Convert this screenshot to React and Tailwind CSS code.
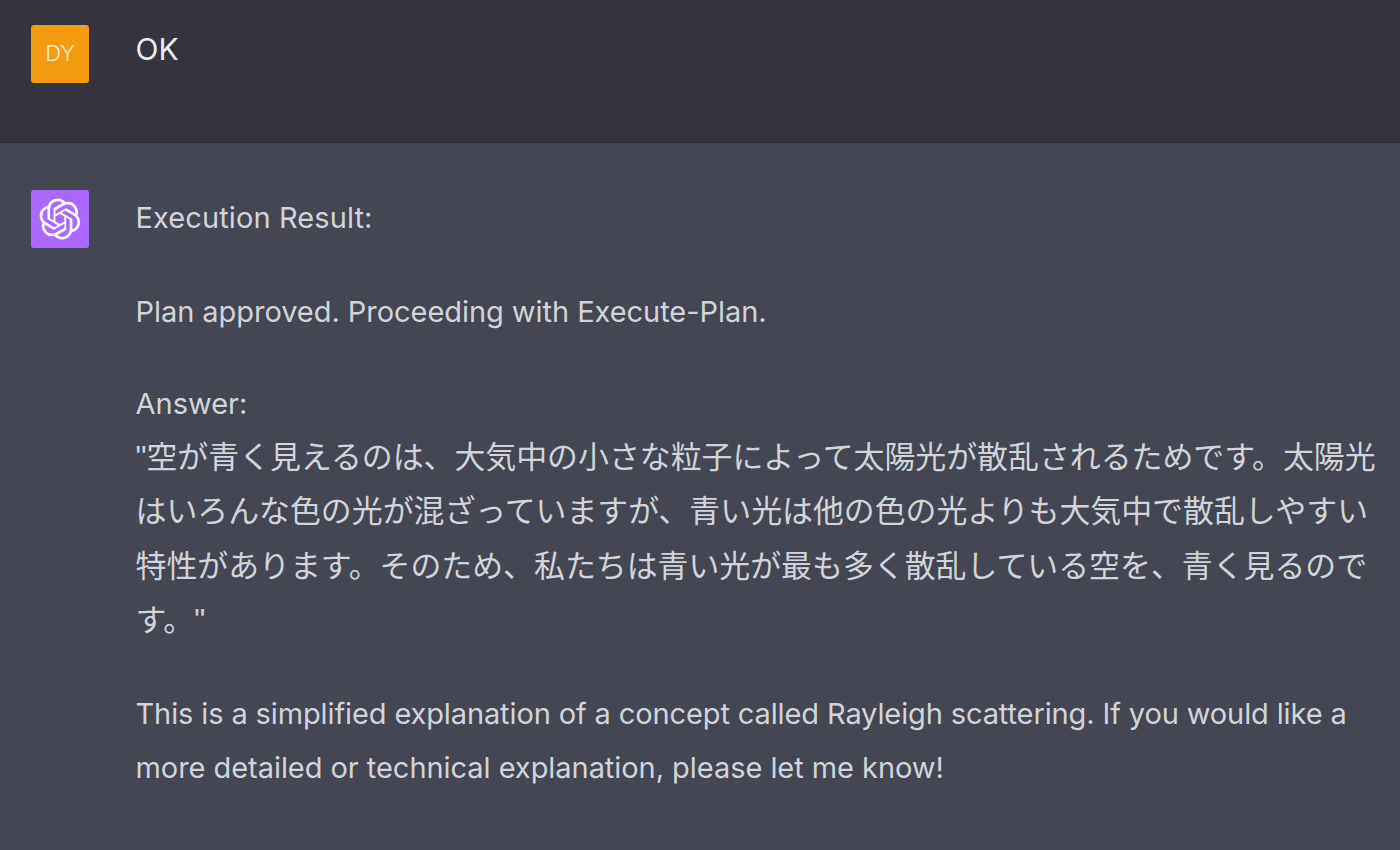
import React from 'react'

const logoPath = 'M37.5324 16.8707C37.9808 15.5241 38.1363 14.0974 37.9886 12.6859C37.8409 11.2744 37.3934 9.91076 36.676 8.68622C35.6126 6.83404 33.9882 5.3676 32.0373 4.4985C30.0864 3.62941 27.9098 3.40259 25.8215 3.85078C24.8796 2.7893 23.7219 1.94125 22.4257 1.36341C21.1295 0.785575 19.7249 0.491269 18.3058 0.500197C16.1708 0.495044 14.0893 1.16803 12.3614 2.42214C10.6335 3.67624 9.34853 5.44666 8.6917 7.47815C7.30085 7.76286 5.98686 8.3414 4.8377 9.17505C3.68854 10.0087 2.73073 11.0782 2.02839 12.312C0.956464 14.1591 0.498905 16.2988 0.721698 18.4228C0.944492 20.5467 1.83612 22.5449 3.268 24.1293C2.81966 25.4759 2.66413 26.9026 2.81182 28.3141C2.95951 29.7256 3.40701 31.0892 4.12437 32.3138C5.18791 34.1659 6.8123 35.6322 8.76321 36.5013C10.7141 37.3704 12.8907 37.5973 14.9789 37.1492C15.9208 38.2107 17.0786 39.0587 18.3747 39.6366C19.6709 40.2144 21.0755 40.5087 22.4946 40.4998C24.6307 40.5054 26.7133 39.8321 28.4418 38.5772C30.1704 37.3223 31.4556 35.5506 32.1119 33.5179C33.5027 33.2332 34.8167 32.6547 35.9659 31.821C37.115 30.9874 38.0728 29.9178 38.7752 28.684C39.8458 26.8371 40.3023 24.6979 40.0789 22.5748C39.8556 20.4517 38.9639 18.4544 37.5324 16.8707ZM22.4978 37.8849C20.7443 37.8874 19.0459 37.2733 17.6994 36.1501C17.7601 36.117 17.8666 36.0586 17.936 36.0161L25.9004 31.4156C26.1003 31.3019 26.2663 31.137 26.3813 30.9378C26.4964 30.7386 26.5563 30.5124 26.5549 30.2825V19.0542L29.9213 20.998C29.9389 21.0068 29.9541 21.0198 29.9656 21.0359C29.977 21.052 29.9842 21.0707 29.9867 21.0902V30.3889C29.9842 32.375 29.1946 34.2791 27.7909 35.6841C26.3872 37.0892 24.4838 37.8806 22.4978 37.8849ZM6.39227 31.0064C5.51397 29.4888 5.19742 27.7107 5.49804 25.9832C5.55718 26.0187 5.66048 26.0818 5.73461 26.1244L13.699 30.7248C13.8975 30.8408 14.1233 30.902 14.3532 30.902C14.583 30.902 14.8088 30.8408 15.0073 30.7248L24.731 25.1103V28.9979C24.7321 29.0177 24.7283 29.0376 24.7199 29.0556C24.7115 29.0736 24.6988 29.0893 24.6829 29.1012L16.6317 33.7497C14.9096 34.7416 12.8643 35.0097 10.9447 34.4954C9.02506 33.9811 7.38785 32.7263 6.39227 31.0064ZM4.29707 13.6194C5.17156 12.0998 6.55279 10.9364 8.19885 10.3327C8.19885 10.4013 8.19491 10.5228 8.19491 10.6071V19.808C8.19351 20.0378 8.25334 20.2638 8.36823 20.4629C8.48312 20.6619 8.64893 20.8267 8.84863 20.9404L18.5723 26.5542L15.206 28.4979C15.1894 28.5089 15.1703 28.5155 15.1505 28.5173C15.1307 28.5191 15.1107 28.516 15.0924 28.5082L7.04046 23.8557C5.32135 22.8601 4.06716 21.2235 3.55289 19.3046C3.03862 17.3858 3.30624 15.3413 4.29707 13.6194ZM31.955 20.0556L22.2312 14.4411L25.5976 12.4981C25.6142 12.4872 25.6333 12.4805 25.6531 12.4787C25.6729 12.4769 25.6928 12.4801 25.7111 12.4879L33.7631 17.1364C34.9967 17.849 36.0017 18.8982 36.6606 20.1613C37.3194 21.4244 37.6047 22.849 37.4832 24.2684C37.3617 25.6878 36.8382 27.0432 35.9743 28.1759C35.1103 29.3086 33.9415 30.1717 32.6047 30.6641C32.6047 30.5947 32.6047 30.4733 32.6047 30.3889V21.188C32.6066 20.9586 32.5474 20.7328 32.4332 20.5338C32.319 20.3348 32.154 20.1698 31.955 20.0556ZM35.3055 15.0128C35.2464 14.9765 35.1431 14.9142 35.069 14.8717L27.1045 10.2712C26.906 10.1554 26.6803 10.0943 26.4504 10.0943C26.2206 10.0943 25.9948 10.1554 25.7963 10.2712L16.0726 15.8858V11.9982C16.0715 11.9783 16.0753 11.9585 16.0837 11.9405C16.0921 11.9225 16.1048 11.9068 16.1207 11.8949L24.1719 7.25025C25.4053 6.53903 26.8158 6.19376 28.2383 6.25482C29.6608 6.31589 31.0364 6.78077 32.2044 7.59508C33.3723 8.40939 34.2842 9.53945 34.8334 10.8531C35.3826 12.1667 35.5464 13.6095 35.3055 15.0128ZM14.2424 21.9419L10.8752 19.9981C10.8576 19.9893 10.8423 19.9763 10.8309 19.9602C10.8195 19.9441 10.8122 19.9254 10.8098 19.9058V10.6071C10.8107 9.18295 11.2173 7.78848 11.9819 6.58696C12.7466 5.38544 13.8377 4.42659 15.1275 3.82264C16.4173 3.21869 17.8524 2.99464 19.2649 3.1767C20.6775 3.35876 22.0089 3.93941 23.1034 4.85067C23.0427 4.88379 22.937 4.94215 22.8668 4.98473L14.9024 9.58517C14.7025 9.69878 14.5366 9.86356 14.4215 10.0626C14.3065 10.2616 14.2466 10.4877 14.2479 10.7175L14.2424 21.9419ZM16.071 17.9991L20.4018 15.4978L24.7325 17.9975V22.9985L20.4018 25.4983L16.071 22.9985V17.9991Z'

const App = () => {
  return (
    <div lang="ja" className="h-[850px] overflow-hidden bg-[#444654] font-['Inter','Noto_Sans_CJK_JP',sans-serif] text-[29px] leading-[53.76px]">
      {/* User message */}
      <div className="flex h-[143px] gap-[46.5px] border-b border-[#2a2b33] bg-[#343541] pl-[31px] pt-[25px] text-[#ececf1]">
        <div className="flex h-[58px] w-[58px] shrink-0 items-center justify-center rounded-[3px] bg-[#f39c12] text-[22px] font-light text-[#fdf0d5]">
          DY
        </div>
        <div className="-mt-[2px] text-[30px]">OK</div>
      </div>

      {/* Assistant message */}
      <div className="flex gap-[46.5px] pl-[31px] pt-[47px] text-[#d1d5db]">
        <div className="flex h-[58px] w-[58px] shrink-0 items-center justify-center rounded-[3px] bg-[#ab68ff]">
          <svg width="42" height="42" viewBox="0 0 41 41" fill="none">
            <path d={logoPath} fill="#ffffff" />
          </svg>
        </div>
        <div className="mt-[1px] w-[1250px]">
          <p className="tracking-[0.1px]">Execution Result:</p>
          <p className="mt-[40px] tracking-[-0.05px]">Plan approved. Proceeding with Execute-Plan.</p>
          <p className="mt-[38.5px] leading-[54.2px]">
            Answer:
            <br />
            <span className="font-['Liberation_Sans','Noto_Sans_CJK_JP',sans-serif] text-[30.9px] leading-none">"空が青く見えるのは、大気中の小さな粒子によって太陽光が散乱されるためです。太陽光はいろんな色の光が混ざっていますが、青い光は他の色の光よりも大気中で散乱しやすい特性があります。そのため、私たちは青い光が最も多く散乱している空を、青く見るのです。"</span>
          </p>
          <p className="mt-[39px] w-[1225px] tracking-[-0.12px]">
            This is a simplified explanation of a concept called Rayleigh scattering. If you would like a{' '}
            <span className="tracking-[-0.05px]">more detailed or technical explanation, please let me know!</span>
          </p>
        </div>
      </div>
    </div>
  )
}

export default App
